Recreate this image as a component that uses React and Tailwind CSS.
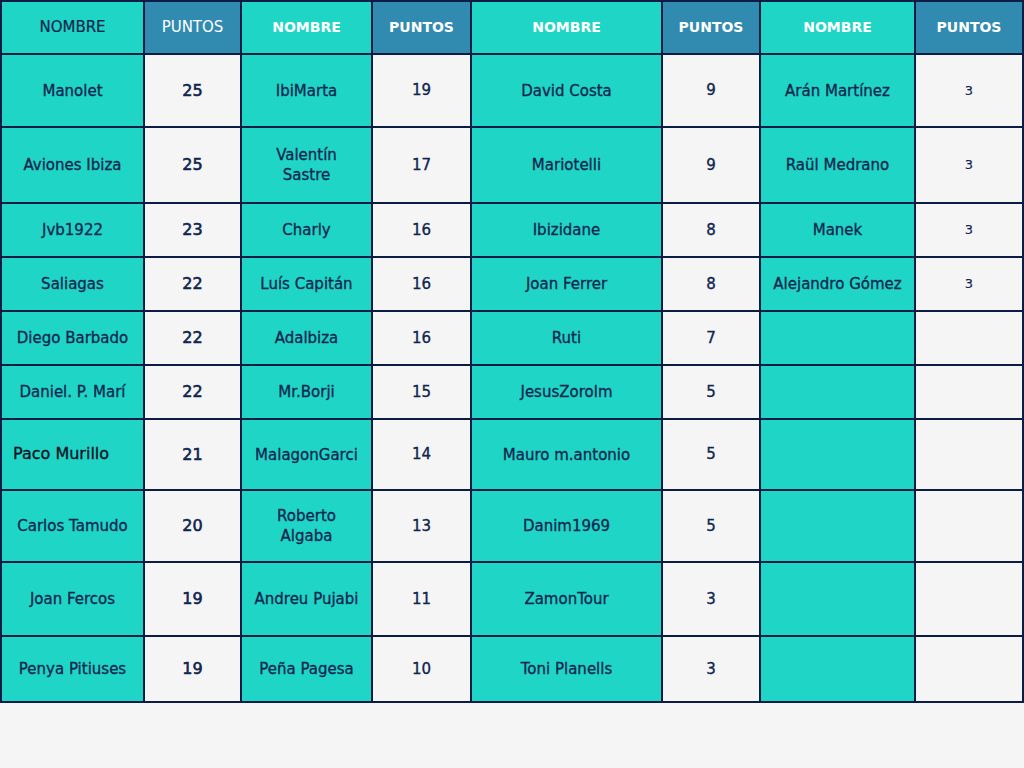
const rows = [
  ["Manolet", "25", "IbiMarta", "19", "David Costa", "9", "Arán Martínez", "3"],
  ["Aviones Ibiza", "25", "Valentín\nSastre", "17", "Mariotelli", "9", "Raül Medrano", "3"],
  ["Jvb1922", "23", "Charly", "16", "Ibizidane", "8", "Manek", "3"],
  ["Saliagas", "22", "Luís Capitán", "16", "Joan Ferrer", "8", "Alejandro Gómez", "3"],
  ["Diego Barbado", "22", "Adalbiza", "16", "Ruti", "7", "", ""],
  ["Daniel. P. Marí", "22", "Mr.Borji", "15", "JesusZorolm", "5", "", ""],
  ["Paco Murillo", "21", "MalagonGarci", "14", "Mauro m.antonio", "5", "", ""],
  ["Carlos Tamudo", "20", "Roberto\nAlgaba", "13", "Danim1969", "5", "", ""],
  ["Joan Fercos", "19", "Andreu Pujabi", "11", "ZamonTour", "3", "", ""],
  ["Penya Pitiuses", "19", "Peña Pagesa", "10", "Toni Planells", "3", "", ""],
];

const rowHeights = [
  "h-[71px]",
  "h-[74px]",
  "h-[52px]",
  "h-[52px]",
  "h-[52px]",
  "h-[52px]",
  "h-[69px]",
  "h-[70px]",
  "h-[72px]",
  "h-[64px]",
];

// weight per PUNTOS column, left to right
const numStyles = [
  "text-[16px] [-webkit-text-stroke:0.6px_#10254f]",
  "text-[15px] [-webkit-text-stroke:0.35px_#10254f]",
  "text-[15px] [-webkit-text-stroke:0.35px_#10254f]",
  "text-[13px] [-webkit-text-stroke:0.15px_#10254f]",
];

const Cell = ({ value, col, height, special }) => {
  const isName = col % 2 === 0;
  const bg = isName ? "bg-[#1fd5c5]" : "bg-[#f5f5f5]";

  if (special) {
    return (
      <div
        className={`${height} ${bg} flex items-center pl-[11px] pb-[2px] text-[16px] text-[#0a0f1f] [-webkit-text-stroke:0.3px_#0a0f1f]`}
      >
        {value}
      </div>
    );
  }

  return (
    <div
      className={`${height} ${bg} flex items-center justify-center text-center text-[#10254f] ${
        isName
          ? "text-[15px] leading-[20px] [-webkit-text-stroke:0.3px_#10254f]"
          : numStyles[(col - 1) / 2]
      }`}
    >
      <span className="whitespace-pre-line">{value}</span>
    </div>
  );
};

export default function App() {
  const headers = [0, 1, 2, 3, 4, 5, 6, 7];

  return (
    <div
      className="min-h-screen bg-[#f5f5f5]"
      style={{ fontFamily: "'DejaVu Sans', sans-serif" }}
    >
      <div className="grid grid-cols-[141px_95px_129px_97px_189px_96px_153px_106px] gap-[2px] p-[2px] bg-[#0b1d45] w-[1024px]">
        {headers.map((i) => {
          const isName = i % 2 === 0;
          const first = i < 2;
          return (
            <div
              key={i}
              className={`h-[51px] flex items-center justify-center ${
                isName ? "bg-[#1fd5c5]" : "bg-[#318bb0]"
              } ${
                first
                  ? isName
                    ? "text-[15px] text-[#10254f] [-webkit-text-stroke:0.2px_#10254f]"
                    : "text-[15px] text-white"
                  : "text-[14px] text-white font-bold"
              }`}
            >
              {isName ? "NOMBRE" : "PUNTOS"}
            </div>
          );
        })}

        {rows.map((row, r) =>
          row.map((value, c) => (
            <Cell
              key={`${r}-${c}`}
              value={value}
              col={c}
              height={rowHeights[r]}
              special={r === 6 && c === 0}
            />
          ))
        )}
      </div>
    </div>
  );
}
